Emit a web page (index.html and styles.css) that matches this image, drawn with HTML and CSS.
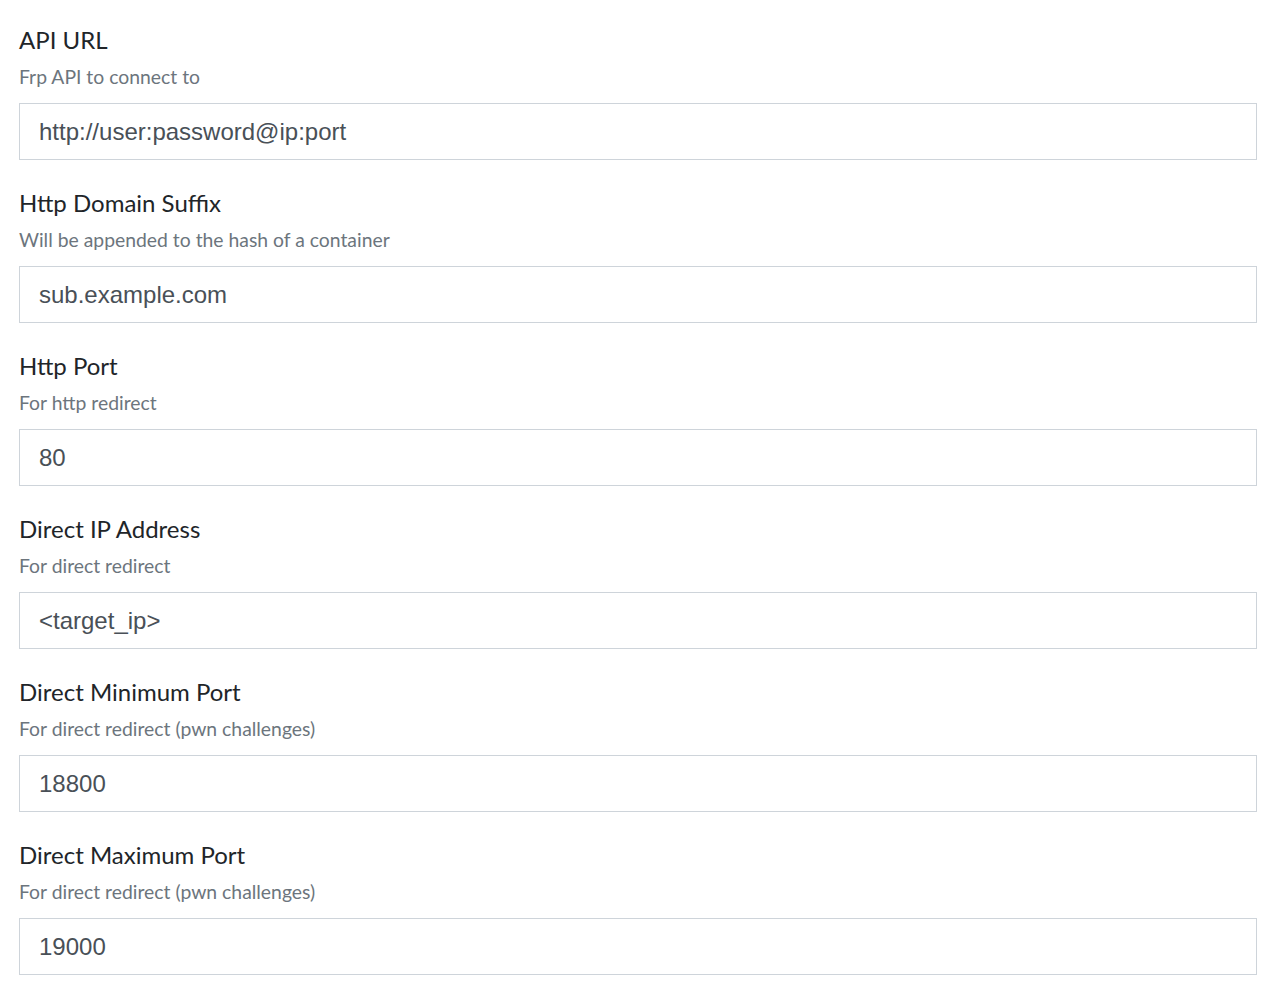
FILE: index.html
```html
<!DOCTYPE html>
<html>
<head>
<meta charset="utf-8">
<link rel="stylesheet" href="styles.css">
</head>
<body>
<form class="settings">
  <div class="group">
    <label class="label">API URL</label>
    <div class="help">Frp API to connect to</div>
    <input class="field" type="text" value="http://user:password@ip:port">
  </div>
  <div class="group">
    <label class="label">Http Domain Suffix</label>
    <div class="help">Will be appended to the hash of a container</div>
    <input class="field" type="text" value="sub.example.com">
  </div>
  <div class="group">
    <label class="label">Http Port</label>
    <div class="help">For http redirect</div>
    <input class="field" type="text" value="80">
  </div>
  <div class="group">
    <label class="label">Direct IP Address</label>
    <div class="help">For direct redirect</div>
    <input class="field" type="text" value="&lt;target_ip&gt;">
  </div>
  <div class="group">
    <label class="label">Direct Minimum Port</label>
    <div class="help">For direct redirect (pwn challenges)</div>
    <input class="field" type="text" value="18800">
  </div>
  <div class="group">
    <label class="label">Direct Maximum Port</label>
    <div class="help">For direct redirect (pwn challenges)</div>
    <input class="field" type="text" value="19000">
  </div>
</form>
</body>
</html>
```

FILE: styles.css
```css
html, body {
  margin: 0;
  padding: 0;
  background: #ffffff;
}

body {
  font-family: Lato, "Noto Sans", sans-serif;
  color: #212529;
}

.settings {
  padding: 22px 17px 0 19px;
  display: flex;
  flex-direction: column;
}

.group {
  display: flex;
  flex-direction: column;
  margin-bottom: 25px;
}

.label {
  display: block;
  font-size: 24px;
  line-height: 36px;
  margin-bottom: 4px;
  color: #212529;
}

.help {
  font-size: 19.35px;
  line-height: 29px;
  margin-bottom: 12px;
  color: #6c757d;
}

.field {
  box-sizing: border-box;
  width: 100%;
  height: 57px;
  margin: 0;
  padding: 0 19px;
  border: 1px solid #ced4da;
  border-radius: 0;
  background: #ffffff;
  font-family: "Liberation Sans", Arial, sans-serif;
  font-size: 24px;
  color: #495057;
  outline: none;
}
```
